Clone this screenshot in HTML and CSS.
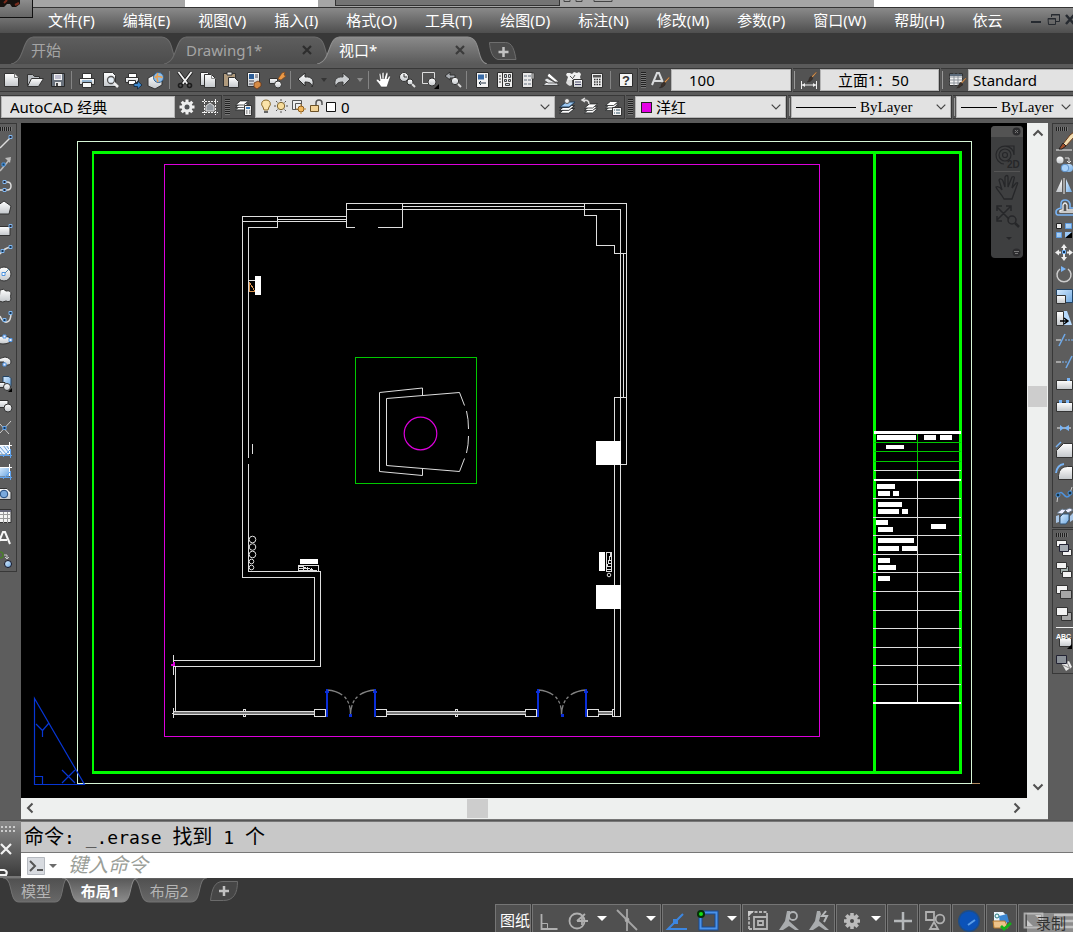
FILE: index.html
```
<!DOCTYPE html>
<html lang="zh-CN">
<head>
<meta charset="utf-8">
<title>AutoCAD 经典</title>
<link rel="stylesheet" href="styles.css">
</head>
<body>
<svg class="defs" aria-hidden="true">
  <defs>
    <linearGradient id="g" x1="0" y1="0" x2="0" y2="1"><stop offset="0" stop-color="#fff"/><stop offset="1" stop-color="#c3c7cb"/></linearGradient>
    <linearGradient id="b" x1="0" y1="0" x2="1" y2="1"><stop offset="0" stop-color="#d8ecff"/><stop offset="1" stop-color="#6fa8e0"/></linearGradient>
    <linearGradient id="tab" x1="0" y1="0" x2="0" y2="1"><stop offset="0" stop-color="#5e5e5e"/><stop offset="1" stop-color="#4c4c4c"/></linearGradient>
    <linearGradient id="tabon" x1="0" y1="0" x2="0" y2="1"><stop offset="0" stop-color="#8a8a8a"/><stop offset="1" stop-color="#5a5a5a"/></linearGradient>
    <linearGradient id="laytab" x1="0" y1="0" x2="0" y2="1"><stop offset="0" stop-color="#505050"/><stop offset="1" stop-color="#686868"/></linearGradient>
    <linearGradient id="layon" x1="0" y1="0" x2="0" y2="1"><stop offset="0" stop-color="#585858"/><stop offset="1" stop-color="#8c8c8c"/></linearGradient>
    <symbol id="brush" viewBox="0 0 22 22"><path d="M19 3l1 1-7 8-2-1z" fill="#e9a65a" stroke="#6b3a1c" stroke-width=".6"/><path d="M12 10q3 2 1 5-3 4-8 4 3-2 3-5 1-4 4-4z" fill="#3c312b" stroke="#1c1c1c" stroke-width=".6"/></symbol>
    <symbol id="layers" viewBox="0 0 22 22"><g fill="#fff" stroke="#26282a"><path d="M3 17l6-5h10l-6 5z"/><path d="M3 14l6-5h10l-6 5z"/><path d="M3 11l6-5h10l-6 5z"/></g></symbol>
    <symbol id="sheet" viewBox="0 0 22 22"><path d="M3.500 4.500h10l4 4v9h-14z" fill="url(#g)" stroke="#333"/><path d="M13.500 4.500v4h4" fill="#eee" stroke="#777"/></symbol>
  </defs>
</svg>

<div class="titlestrip">
  <button class="appbtn" aria-label="应用程序菜单"><svg width="32" height="17" viewBox="0 0 32 17"><path d="M0 0h20v4l-4 3h-4l-2-3H7L4 7H0z" fill="#17120f"/><path d="M4 3l3-3M15 5l4-2" stroke="#7a2b1c" stroke-width="2"/></svg></button>
  <i class="ts ts-a"></i><i class="ts ts-white"></i><i class="ts ts-b"></i><i class="ts ts-box"></i><i class="ts ts-c"><svg width="60" height="3" viewBox="0 0 60 3"><path d="M4 0v1.500h6V0M16 0v1.500h6V0M34 0v1.500h18V0" fill="none" stroke="#444"/></svg></i><i class="ts ts-end"></i>
</div>

<header class="menubar">
  <nav class="menus">
    <button>文件(F)</button><button>编辑(E)</button><button>视图(V)</button><button>插入(I)</button><button>格式(O)</button><button>工具(T)</button><button>绘图(D)</button><button>标注(N)</button><button>修改(M)</button><button>参数(P)</button><button>窗口(W)</button><button>帮助(H)</button><button>依云</button>
  </nav>
  <div class="winbtns">
    <button aria-label="最小化"><svg width="12" height="14" viewBox="0 0 12 14"><path d="M1 9h10" stroke="#262a30" stroke-width="2"/></svg></button>
    <button aria-label="还原"><svg width="13" height="14" viewBox="0 0 13 14" fill="none" stroke="#262a30"><path d="M4.500 4V1.500h8v7H9M1 5.500h7.500v6h-7z"/><path d="M4 2h9M1 6h8" /></svg></button>
    <button aria-label="关闭"><svg width="8" height="14" viewBox="0 0 8 14"><path d="M1 2l8 9M9 2l-8 9" stroke="#262a30" stroke-width="2.500"/></svg></button>
  </div>
</header>

<nav class="filetabs">
  <button class="ftab ftab-start"><svg class="shape" viewBox="0 0 167 28" preserveAspectRatio="none"><path d="M0 28C14 26 10 2 22 1H148C162 2 156 26 167 28z" fill="url(#tab)"/><path d="M0 28C14 26 10 2 22 1H148C162 2 156 26 167 28" fill="none" stroke="#6c6c6c"/></svg><span>开始</span></button>
  <button class="ftab"><svg class="shape" viewBox="0 0 167 28" preserveAspectRatio="none"><path d="M0 28C14 26 10 2 22 1H148C162 2 156 26 167 28z" fill="url(#tab)"/><path d="M0 28C14 26 10 2 22 1H148C162 2 156 26 167 28" fill="none" stroke="#6c6c6c"/></svg><span>Drawing1*</span><svg class="x" width="10" height="10" viewBox="0 0 10 10"><path d="M1 1l8 8M9 1L1 9" stroke="#2d2d2d" stroke-width="2.200"/></svg></button>
  <button class="ftab on"><svg class="shape" viewBox="0 0 167 28" preserveAspectRatio="none"><path d="M0 28C14 26 10 2 22 1H148C162 2 156 26 167 28z" fill="url(#tabon)"/><path d="M0 28C14 26 10 2 22 1H148C162 2 156 26 167 28" fill="none" stroke="#8f8f8f"/></svg><span>视口*</span><svg class="x" width="10" height="10" viewBox="0 0 10 10"><path d="M1 1l8 8M9 1L1 9" stroke="#3b3b3b" stroke-width="2.200"/></svg></button>
  <button class="ftab-add" aria-label="新图形"><svg width="28" height="20" viewBox="0 0 28 20"><path d="M.5 1.500h16c7 0 9 8 10.500 17h-18C3 17 1 9 .5 1.500z" fill="#4c4c4c" stroke="#6e6e6e"/><path d="M14.500 6v10M9.500 11h10" stroke="#c2c2c2" stroke-width="2.500"/></svg></button>
</nav>

<section class="toolbars">
  <div class="trow">
    <div class="tb flush">
      <button class="i" aria-label="新建"><svg viewBox="0 0 22 22"><use href="#sheet"/></svg></button>
      <button class="i" aria-label="打开"><svg viewBox="0 0 22 22"><path d="M3.500 17V5.500h5l2 2h5V10" fill="#b8bcc0" stroke="#333"/><path d="M3.500 17.500l4-8h12l-5 8z" fill="url(#g)" stroke="#333"/></svg></button>
      <button class="i" aria-label="保存"><svg viewBox="0 0 22 22"><path d="M4.500 4.500h13v13h-13z" fill="#69717c" stroke="#282828"/><path d="M7 5h8v6H7z" fill="#f2f2f2"/><path d="M8 7h6M8 9h6" stroke="#88a"/><path d="M8 13h6v4H8z" fill="#e8e8e8"/><path d="M9 14h2v3H9z" fill="#444"/></svg></button>
      <i class="sep"></i>
      <button class="i" aria-label="打印"><svg viewBox="0 0 22 22"><path d="M6.500 9V4.500h9V9" fill="#fff" stroke="#333"/><path d="M3.500 9.500h15v6h-15z" fill="url(#g)" stroke="#333"/><path d="M6.500 13.500h9v5h-9z" fill="#f7f7f7" stroke="#333"/><path d="M6 12h10" stroke="#4b87bb"/></svg></button>
      <button class="i" aria-label="打印预览"><svg viewBox="0 0 22 22"><path d="M4.500 3.500h9l3 3v11h-12z" fill="url(#g)" stroke="#333"/><circle cx="12" cy="11" r="3.500" fill="#e4edf5" stroke="#555" stroke-width="1.300"/><path d="M15 14l4 4" stroke="#eee" stroke-width="2.500"/></svg></button>
      <button class="i" aria-label="发布"><svg viewBox="0 0 22 22"><path d="M6.500 8V4.500h8V8" fill="#fff" stroke="#333"/><path d="M3.500 8.500h13v5h-13z" fill="url(#g)" stroke="#333"/><path d="M6.500 11.500h7v4h-7z" fill="#fff" stroke="#333"/><path d="M12 14.500h3.500V12l4.500 4-4.500 4v-2.500H12z" fill="#3e8ad0" stroke="#123" stroke-width=".8"/></svg></button>
      <button class="i" aria-label="三维打印"><svg viewBox="0 0 22 22"><path d="M3 9l6-3 8 3v7l-7 4-7-3z" fill="url(#g)" stroke="#333"/><circle cx="13.500" cy="8.500" r="5" fill="#8dbdea" stroke="#34638f"/><path d="M9.500 8.500q4-2 8 0M13 4q-2 4 0 9" stroke="#eaa04d" fill="none" stroke-width="1.500"/></svg></button>
      <i class="sep"></i>
      <button class="i" aria-label="剪切"><svg viewBox="0 0 22 22"><path d="M4.500 3l9 12M17.500 3l-9 12" stroke="#1c1c1c" stroke-width="3.500"/><path d="M4.500 3l9 12M17.500 3l-9 12" stroke="#f5f5f5" stroke-width="1.800"/><circle cx="6.500" cy="16.500" r="2" fill="none" stroke="#1c1c1c" stroke-width="1.600"/><circle cx="15.500" cy="16.500" r="2" fill="none" stroke="#1c1c1c" stroke-width="1.600"/></svg></button>
      <button class="i" aria-label="复制"><svg viewBox="0 0 22 22"><path d="M3.500 3.500h7l2 2v11h-9z" fill="url(#g)" stroke="#333"/><path d="M7.500 5.500h7l4 4v9h-11z" fill="url(#g)" stroke="#333"/><path d="M14.500 5.500v4h4" fill="none" stroke="#888"/></svg></button>
      <button class="i" aria-label="粘贴"><svg viewBox="0 0 22 22"><path d="M3.500 4.500h12v13h-12z" fill="#b09a7c" stroke="#333"/><path d="M7 3h5v3H7z" fill="#eee" stroke="#333"/><path d="M8.500 8.500h6l4 4v6h-10z" fill="url(#g)" stroke="#333"/></svg></button>
      <button class="i" aria-label="特性匹配"><svg viewBox="0 0 22 22"><path d="M4.500 3.500h12v14h-12z" fill="url(#g)" stroke="#333"/><path d="M6 5h5v5H6z" fill="#2c5e99"/><path d="M12 6h3M12 8h3M6 12h5M6 15h4" stroke="#445"/><path d="M11 14l4-2 3 2v3l-4 3-3-2z" fill="#d68b46" stroke="#69371a" stroke-width=".8"/></svg></button>
      <button class="i" aria-label="块编辑器"><svg viewBox="0 0 22 22"><path d="M3.500 9.500h8v5h-8z" fill="url(#g)" stroke="#333"/><circle cx="12" cy="15.500" r="3.500" fill="url(#g)" stroke="#333"/><path d="M12 10l4-6 3-1-1 3 2 1-5 4z" fill="#ed9a46" stroke="#80491d" stroke-width=".7"/></svg></button>
      <i class="sep"></i>
      <button class="i" aria-label="放弃"><svg viewBox="0 0 22 22"><path d="M3 10l7-6v4c7-1 10 4 7 10 0-4-3-5-7-5v4z" fill="url(#g)" stroke="#2b2b2b"/></svg></button>
      <button class="dd" aria-label="放弃列表"><svg viewBox="0 0 8 6"><path d="M1 1h6L4 5z" fill="#353535"/></svg></button>
      <button class="i" aria-label="重做"><svg viewBox="0 0 22 22"><path d="M19 10l-7-6v4C5 7 2 12 5 18c0-4 3-5 7-5v4z" fill="#c9cccf" stroke="#3b3b3b"/></svg></button>
      <button class="dd" aria-label="重做列表"><svg viewBox="0 0 8 6"><path d="M1 1h6L4 5z" fill="#8b8b8b"/></svg></button>
      <i class="sep"></i>
      <button class="i" aria-label="平移"><svg viewBox="0 0 22 22"><path d="M8 18C6 14 4 13 3 11c1-1 2-1 4 1L6 5c1-1 2 0 2 1l1 4V4c1-1 2-1 2 0v6l2-6c1-1 2 0 2 1l-1 5 2-3c1 0 2 0 1 2-1 3-2 6-3 9z" fill="#fff" stroke="#333" stroke-width=".6"/></svg></button>
      <button class="i" aria-label="实时缩放"><svg viewBox="0 0 22 22"><circle cx="8" cy="8" r="4.500" fill="url(#g)" stroke="#333"/><path d="M8 5v3h3" stroke="#333" fill="none"/><circle cx="14" cy="13" r="3" fill="url(#g)" stroke="#333"/><path d="M16 15l3 3" stroke="#ddd" stroke-width="2"/></svg></button>
      <button class="i" aria-label="窗口缩放"><svg viewBox="0 0 22 22"><path d="M3.500 3.500h12v11h-12z" fill="none" stroke="#ddd"/><circle cx="13" cy="13" r="4" fill="url(#g)" stroke="#333"/><path d="M20 15v5h-5z" fill="#000"/></svg></button>
      <button class="i" aria-label="缩放上一个"><svg viewBox="0 0 22 22"><path d="M3 7l5-4v3h5v3H8v2z" fill="#a9adb2" stroke="#333"/><circle cx="13" cy="12" r="3.700" fill="url(#g)" stroke="#333"/><path d="M16 15l3 3" stroke="#ddd" stroke-width="2"/></svg></button>
      <i class="sep"></i>
      <button class="i" aria-label="特性"><svg viewBox="0 0 22 22"><path d="M5.500 3.500h12v15h-12z" fill="#f3f3f3" stroke="#2b2b2b"/><path d="M7 5.500h6v5H7z" fill="#386ba8"/><path d="M14 6h2M14 8h2M8 14h7M8 14l2-2M8 14l2 2" stroke="#234" fill="none"/></svg></button>
      <button class="i" aria-label="设计中心"><svg viewBox="0 0 22 22"><path d="M3.500 3.500h15v15h-15z" fill="#eee" stroke="#2b2b2b"/><path d="M8.500 4v14" stroke="#333"/><path d="M5 7h2M5 10h2M5 13h2" stroke="#333"/><path d="M10.500 5.500h2v3h-2zM14.500 5.500h2v3h-2zM10.500 10.500h2v2h-2zM14.500 10.500h2v2h-2zM11.500 14.500h4v2h-4z" fill="#c8d4e2" stroke="#444"/></svg></button>
      <button class="i" aria-label="工具选项板"><svg viewBox="0 0 22 22"><path d="M5.500 3.500h10v15h-10z" fill="#e9e9e9" stroke="#333"/><path d="M15 4h2v6h-2z" fill="#ccc" stroke="#333" stroke-width=".7"/><path d="M7 6h3v2H7zM11 6h3v2h-3zM7 10h3v2H7zM11 10h3v2h-3zM7 14h3v2H7zM11 14h3v2h-3z" fill="#a6acb4"/></svg></button>
      <button class="i" aria-label="图纸集"><svg viewBox="0 0 22 22"><path d="M3 16.500l3-3h10l3 3z" fill="url(#g)" stroke="#333" stroke-width=".8"/><path d="M4 11l3-2 9 5H8z" fill="#e2e4e6" stroke="#444" stroke-width=".8"/><path d="M7 7l2-3 10 9h-4z" fill="#fff" stroke="#444" stroke-width=".8"/></svg></button>
      <button class="i" aria-label="标记集"><svg viewBox="0 0 22 22"><path d="M4 4h3l2 1 2-2 3 1 2-1 2 2-1 3 1 3H4l1-3-2-2z" fill="#f1f1f1"/><path d="M4 11l-1 3 2 2 2 1 2-1v-5z" fill="#ddd"/><path d="M7 7l3 3M12 6l-2 3" stroke="#555"/><path d="M10.500 10.500h9v8h-9z" fill="url(#g)" stroke="#333"/><path d="M12 13h6M12 15.500h6" stroke="#446"/></svg></button>
      <button class="i" aria-label="计算器"><svg viewBox="0 0 22 22"><path d="M5.500 4.500h11v14h-11z" fill="#eee" stroke="#333"/><path d="M7 6h8v2.500H7z" fill="#555"/><path d="M8 10.500h1.500M10.500 10.500H12M13 10.500h1.500M8 13h1.500M10.500 13H12M13 13h1.500M8 15.500h1.500M10.500 15.500H12M13 15.500h1.500" stroke="#333" stroke-width="1.500"/></svg></button>
      <i class="sep"></i>
      <button class="i" aria-label="帮助"><svg viewBox="0 0 22 22"><path d="M4.500 4.500h13v13h-13z" fill="#f4f4f4" stroke="#2b2b2b"/><text x="11" y="16" text-anchor="middle" class="q">?</text></svg></button>
    </div>
    <div class="tb">
      <i class="grip"></i>
      <button class="i" aria-label="文字样式"><svg viewBox="0 0 22 22"><path d="M3 16L8 4h2l5 12M5 12h8" fill="none" stroke="#d9dbdd" stroke-width="2"/><use href="#brush" x="7" y="6" width="15" height="15"/></svg></button>
      <select class="combo w120 pl18" aria-label="文字样式"><option>100</option></select>
    </div>
    <div class="tb slim">
      <i class="bar"></i>
      <button class="i" aria-label="标注样式"><svg viewBox="0 0 22 22"><path d="M3.500 12v8M18.500 12v8M3 16h16" stroke="#eee"/><path d="M4 16l3-2v4zM18 16l-3-2v4z" fill="#eee"/><use href="#brush" x="5" y="1" width="16" height="14"/></svg></button>
      <select class="combo w118 pl18" aria-label="标注样式"><option>立面1：50</option></select>
    </div>
    <div class="tb slim grow">
      <i class="bar"></i>
      <button class="i" aria-label="表格样式"><svg viewBox="0 0 22 22"><path d="M3.500 4.500h13v12h-13z" fill="#f2f2f2" stroke="#333"/><path d="M3.500 8h13M3.500 11h13M3.500 14h13M8 4.500v12M12 4.500v12" stroke="#8b9199"/><path d="M4 5h12v2H4z" fill="#5c6a7a"/><use href="#brush" x="7" y="7" width="15" height="14"/></svg></button>
      <select class="combo w160 grow" aria-label="表格样式"><option>Standard</option></select>
    </div>
  </div>

  <div class="trow">
    <div class="tb">
      <select class="combo w174 pl9" aria-label="工作空间"><option>AutoCAD 经典</option></select>
      <button class="i" aria-label="工作空间设置"><svg viewBox="0 0 22 22"><g stroke="#f0f0f0" stroke-width="3"><path d="M11 3.500v15M3.500 11h15M5.700 5.700l10.600 10.600M16.300 5.700L5.700 16.300"/></g><circle cx="11" cy="11" r="5.500" fill="#eceded"/><circle cx="11" cy="11" r="2.500" fill="#505356"/></svg></button>
      <button class="i" aria-label="我的工作空间"><svg viewBox="0 0 22 22"><path d="M5.500 3v16M16.500 3v16M3 5.500h16M3 16.500h16" stroke="#f0f0f0" stroke-dasharray="2 1"/><path d="M7 15v-5l4-3 4 3v5z" fill="#91979e" stroke="#ddd"/></svg></button>
    </div>
    <div class="tb">
      <i class="grip"></i>
      <button class="i" aria-label="图层特性"><svg viewBox="0 0 22 22"><use href="#layers" x="0" y="-1" width="18" height="20"/><path d="M11.500 9.500h7v10h-7z" fill="#f3f3f3" stroke="#333"/><path d="M13 12h4" stroke="#3f7dbd" stroke-width="2"/><path d="M13 15h1.500M16 15h1.500M13 17h1.500M16 17h1.500" stroke="#555"/></svg></button>
      <div class="combo box w299">
        <svg width="90" height="18" viewBox="0 0 90 18" class="lay" aria-hidden="true">
          <path d="M10 2a4 4 0 0 1 3 7l-1 3H8L7 9a4 4 0 0 1 3-7z" fill="#fbe3a8" stroke="#8a6a2a"/><path d="M8 13h4v2H8z" fill="#666"/>
          <circle cx="25" cy="8" r="3.700" fill="#f7dc9b" stroke="#7d6330"/><path d="M25 1v2M25 13v2M18 8h2M30 8h2M20 3l1.500 1.500M28.500 11.500L30 13M20 13l1.500-1.500M28.500 4.500L30 3" stroke="#555"/>
          <path d="M36.500 2.500h9v9h-9zM39.500 5.500h6v6h-6z" fill="#eee" stroke="#555"/><circle cx="45" cy="11" r="3" fill="#f4b95d" stroke="#8a5b1b"/><path d="M45 6v10M40 11h10" stroke="#c98527" stroke-dasharray="1.500 7"/>
          <path d="M60 8V5a3 3 0 0 1 6 0v2" fill="none" stroke="#555" stroke-width="1.500"/><path d="M54.500 7.500h8v6h-8z" fill="#f1d296" stroke="#6b5127"/>
          <path d="M70.500 4.500h9v9h-9z" fill="#fff" stroke="#111"/>
        </svg>
        <select class="bare" aria-label="图层"><option>0</option></select>
      </div>
      <button class="i" aria-label="置为当前图层"><svg viewBox="0 0 22 22"><use href="#layers" x="0" y="1" width="22" height="21"/><path d="M4 11l6-5h9l-6 5z" fill="#9cc8f2" stroke="#26405a"/><circle cx="11" cy="5" r="2.500" fill="#eee" stroke="#555"/></svg></button>
      <button class="i" aria-label="上一个图层"><svg viewBox="0 0 22 22"><use href="#layers" x="3" y="3" width="18" height="18"/><path d="M10 8c0-4-3-4-6-4M6 2L3 4l3 2" fill="none" stroke="#ddd" stroke-width="1.500"/></svg></button>
      <button class="i" aria-label="图层状态"><svg viewBox="0 0 22 22"><use href="#layers" x="1" y="0" width="18" height="19"/><path d="M10.500 11.500h9v8h-9z" fill="#f3f3f3" stroke="#333"/><path d="M12 14h1M14 14h4M12 17h1M14 17h4" stroke="#356"/></svg></button>
    </div>
    <div class="tb">
      <i class="grip"></i>
      <div class="combo box w150"><i class="swatch"></i><select class="bare" aria-label="颜色"><option>洋红</option></select></div>
    </div>
    <div class="tb slim2">
      <i class="bar"></i>
      <div class="combo box w159 serif"><i class="line l60"></i><select class="bare" aria-label="线型"><option>ByLayer</option></select></div>
    </div>
    <div class="tb slim2 grow">
      <i class="bar"></i>
      <div class="combo box w120 serif grow"><i class="line l36"></i><select class="bare" aria-label="线宽"><option>ByLayer</option></select></div>
    </div>
  </div>
</section>

<main class="workspace">
  <aside class="side left">
    <i class="vgrip"></i>
    <button aria-label="直线"><svg viewBox="0 0 16 22"><path d="M0 17L10 7" stroke="#ddd" stroke-width="1.500"/><path d="M9 4.500h3v3H9z" fill="#223" stroke="#7fb6ef"/></svg></button>
    <button aria-label="构造线"><svg viewBox="0 0 16 22"><path d="M0 18L10 6" stroke="#bbb" stroke-width="1.500"/><path d="M5 5l6-1-1 6z" fill="#bbb"/><path d="M2 10h3v3H2z" fill="#146" stroke="#4f94e0"/></svg></button>
    <button aria-label="多段线"><svg viewBox="0 0 16 22"><path d="M4 7h3q4 0 4 4t-4 4H0" fill="none" stroke="#ddd" stroke-width="1.500"/><path d="M3 5.500h3v3H3zM3 13.500h3v3H3z" fill="#223" stroke="#7fb6ef"/></svg></button>
    <button aria-label="多边形"><svg viewBox="0 0 16 22"><path d="M-3 9l7-5 7 5-2 8h-10z" fill="url(#g)" stroke="#333"/></svg></button>
    <button aria-label="矩形"><svg viewBox="0 0 16 22"><path d="M-2 7.500h12v9H-2z" fill="url(#g)" stroke="#333"/><path d="M9 5.500h3v3H9z" fill="#223" stroke="#7fb6ef"/></svg></button>
    <button aria-label="圆弧"><svg viewBox="0 0 16 22"><path d="M0 13Q4 7 11 6" fill="none" stroke="#ddd" stroke-width="1.500"/><path d="M9 4.500h3v3H9zM1 8.500h3v3H1z" fill="#135" stroke="#7fb6ef"/></svg></button>
    <button aria-label="圆"><svg viewBox="0 0 16 22"><circle cx="4" cy="11" r="7" fill="url(#g)" stroke="#333"/><path d="M4 11l5-5" stroke="#58a"/><path d="M2 9.500h3v3H2z" fill="#fff" stroke="#4f94e0"/></svg></button>
    <button aria-label="修订云线"><svg viewBox="0 0 16 22"><path d="M0 5q4-2 6 1 5-1 5 3-1 2 0 5-1 4-5 2-3 2-7 0z" fill="url(#g)" stroke="#333"/></svg></button>
    <button aria-label="样条曲线"><svg viewBox="0 0 16 22"><path d="M0 9q3 7 7 6 4-1 4-9" fill="none" stroke="#ddd" stroke-width="1.500"/><path d="M9 4.500h3v3H9zM3 11.500h3v3H3z" fill="#135" stroke="#7fb6ef"/></svg></button>
    <button aria-label="椭圆"><svg viewBox="0 0 16 22"><ellipse cx="3" cy="11" rx="8" ry="4" fill="url(#g)" stroke="#333"/><path d="M3 6h3v3H3zM9 9.500h3v3H9z" fill="#eef" stroke="#4f94e0"/></svg></button>
    <button aria-label="椭圆弧"><svg viewBox="0 0 16 22"><path d="M-3 11q3-5 8-5 6 1 6 5t-7 3v-3z" fill="url(#g)" stroke="#333"/><path d="M3 12h3v3H3z" fill="#eef" stroke="#4f94e0"/></svg></button>
    <button aria-label="插入块"><svg viewBox="0 0 16 22"><path d="M3 3.500h6l2 2v8H3z" fill="url(#b)" stroke="#246"/><path d="M-1 9.500h6v5h-6z" fill="url(#g)" stroke="#333"/><circle cx="7" cy="14" r="3.500" fill="url(#g)" stroke="#333"/><path d="M12 15v4H8z" fill="#000"/></svg></button>
    <button aria-label="创建块"><svg viewBox="0 0 16 22"><path d="M-1 5.500h9v7h-9z" fill="url(#g)" stroke="#333"/><circle cx="8" cy="13" r="4" fill="url(#g)" stroke="#333"/></svg></button>
    <button aria-label="点"><svg viewBox="0 0 16 22"><path d="M0 7l9 10M0 16L11 4" stroke="#ccc"/><path d="M3 9.500h3v3H3z" fill="#135" stroke="#5fa3ef"/></svg></button>
    <button aria-label="图案填充"><svg viewBox="0 0 16 22"><path d="M-1 6.500h10v9H-1z" fill="#e8f2ff"/><path d="M0 8l7 8M3 6l6 8M0 12l3 4M6 6l3 4" stroke="#6e9fd0"/><path d="M0 6.500h12M9.500 3v12" stroke="#fff"/><path d="M0 16.500h12M10.500 11v8M3 18l8-8" stroke="#5fa3ef"/></svg></button>
    <button aria-label="渐变色"><svg viewBox="0 0 16 22"><path d="M-1 6.500h10v9H-1z" fill="url(#b)"/><path d="M0 6.500h12M9.500 3v12" stroke="#fff"/><path d="M0 16.500h12M10.500 11v8M3 18l8-8" stroke="#5fa3ef"/></svg></button>
    <button aria-label="面域"><svg viewBox="0 0 16 22"><path d="M-1 5.500H7l4 4v7H-1z" fill="url(#g)" stroke="#333"/><circle cx="4" cy="11" r="3.800" fill="#7aa9dc" stroke="#234a7c"/></svg></button>
    <button aria-label="表格"><svg viewBox="0 0 16 22"><path d="M-1 4.500h12v13H-1z" fill="#f3f3f3" stroke="#333"/><path d="M0 9.500h11M0 13.500h11M3.500 6v12M7.500 6v12" stroke="#999"/><path d="M0 5h11v2H0z" fill="#667"/></svg></button>
    <button aria-label="多行文字"><svg viewBox="0 0 16 22"><path d="M-2 17L3 5h2l5 12M0 13h7" fill="none" stroke="#f5f5f5" stroke-width="2"/></svg></button>
    <button aria-label="添加选定对象"><svg viewBox="0 0 16 22"><circle cx="0" cy="6" r="3" fill="none" stroke="#4a7d2b" stroke-width="1.500"/><path d="M4 6h3v4M5 8l2 2 2-2" stroke="#ccc" fill="none"/><circle cx="8" cy="15" r="3.500" fill="url(#b)" stroke="#112"/></svg></button>
  </aside>

  <section class="canvas" aria-label="布局1">
    <svg class="drawing" viewBox="21 123 1006 675" shape-rendering="crispEdges" fill="none">
      <path d="M77.500 141.500H971.500V783.500H77.500z" stroke="#d6f5d6"/>
      <path d="M972 783.500h8" stroke="#b08a60"/>
      <g fill="#00fb00"><path d="M92 151h870v3H92zM92 771h870v3H92zM92 151h2v622h-2zM873 151h3v622h-3zM959 151h3v622h-3z"/></g>
      <path d="M164.500 164.500H819.500V736.500H164.500z" stroke="#dc00dc"/>
      <path d="M874 442.500h87M874 451.500h87M874 461.500h87M917.500 432v48" stroke="#00c800"/>
      <path d="M874 470.500h87M873 498.500h88M873 517.500h88M873 535.500h88M873 554.500h88M873 572.500h88M873 591.500h88M873 610.500h88M873 628.500h88M873 647.500h88M873 665.500h88M873 684.500h88M917.500 481v222" stroke="#dedede"/>
      <path d="M874 431h87v3h-87zM874 479h87v2h-87zM873 702h88v2h-88zM877 435h39v5h-39zM924 435h12v5h-12zM940 435h12v5h-12zM886 445h18v4h-18zM877 484h18v5h-18zM878 491h12v5h-12zM893 491h6v5h-6zM878 502h24v5h-24zM878 509h21v5h-21zM902 509h6v5h-6zM876 520h12v5h-12zM878 527h15v5h-15zM931 524h15v5h-15zM878 538h36v5h-36zM878 546h21v5h-21zM902 546h15v5h-15zM878 558h12v5h-12zM878 565h18v5h-18zM878 576h12v5h-12z" fill="#fff"/>
      <g stroke="#dedede">
        <path d="M346 216.500H242.500V577.500H314.500V660.500H173M346 221.500H242M346 219.500H277M277.500 216v11.500H248.500V458M248.500 464v107.500H320.500V666.500H173"/>
        <path d="M355 227.500h-8.500v-24H626.500V464.500H620M346 209.500H620.500V716.500H614.500V465M378 227.500h24.500v-24M402 206.500h182M584.500 203v12.500h12v30h18v8h12M623.500 253v144M626 397.500h-11.500V441"/>
        <path d="M252.500 444v10M173.500 655v7M173.500 666v9M175.500 666v46M173.500 708v10M172 713.500h4"/>
        <path d="M174 711.500h140M174 714.500h140M387 711.500h139M387 714.500h139M598 711.500h14M598 714.500h14M243.500 709.500h2v7h-2zM455.500 709.500h2v7h-2zM314.500 709.500h11v7h-11zM375.500 709.500h11v7h-11zM525.500 709.500h11v7h-11zM587.500 709.500h11v7h-11zM612.500 709.500h2v7h-2z"/>
        <path d="M298.500 565.500h20v6h-20zM299 568h8M299 570h14M303 566v5M307 567v4M311 568v3M299 566l18 5M606.500 552.500h5v19h-5zM611 553l-5 18M609 560h3M608 563h3M607 566h5M607 569h5"/>
      </g>
      <path d="M174 713h140M387 713h139M598 713h14" stroke="#777" stroke-width="2"/>
      <g stroke="#dedede" shape-rendering="auto">
        <path d="M422.500 395v-7L379.500 392.500V471.500L422.500 475.500V469M464.500 405.500L459.500 392.500 386.500 398.500V465.500L459.500 471.500 464.500 458.500M466.500 411q2 8 2 18M468.500 436q0 9-2 17"/>
        <circle cx="252.500" cy="539.500" r="3.300"/><circle cx="252.500" cy="547" r="3.300"/><circle cx="252.500" cy="554.500" r="3.300"/><circle cx="251.500" cy="561.500" r="2.300"/><circle cx="251.500" cy="567.500" r="2.300"/><circle cx="609" cy="575" r="1.800"/>
      </g>
      <path d="M355.500 357.500h121v126h-121z" stroke="#00c800"/>
      <circle cx="420.500" cy="433.500" r="16.300" stroke="#dc00dc" stroke-width="1.200" shape-rendering="auto"/>
      <path d="M255 276h6v19h-6zM300 559h18v5h-18zM599 552h6v19h-6zM596 441h25v24h-25zM596 585h25v24h-25z" fill="#fff"/>
      <path d="M249 280.500h6" stroke="#ddd"/><path d="M249.500 282v9.500h5M249.500 282l5 9" stroke="#d8924e"/>
      <path d="M171 664.500h4M173.500 662v4" stroke="#dc00dc" stroke-width="2"/>
      <g stroke="#808080" stroke-width="1.300" shape-rendering="auto">
        <path d="M327 690q24 2 23.500 25M375 690q-24 2-24.500 25M538 690q24 2 23.500 25M586 690q-24 2-24.500 25" stroke-dasharray="16 3 3 2 3 2"/>
      </g>
      <path d="M326 689h2v28h-2zM374 689h2v28h-2zM537 689h2v28h-2zM585 689h2v28h-2zM325 691h4v2h-4zM373 691h4v2h-4zM536 691h4v2h-4zM584 691h4v2h-4zM349 714h3v3h-3zM561 714h3v3h-3z" fill="#0a2ed8"/>
      <g stroke="#0736d4" stroke-width="1.200" shape-rendering="auto">
        <path d="M34.500 698.500V784.500H84.500z"/><path d="M34 776.500h8.500v8M36 724l6.500 6.500L49 723M42.500 730v7M62 770l13 13M75 770l-13 13"/>
      </g>
    </svg>
    <nav class="navbar" aria-label="导航栏">
      <button class="nb-top" aria-label="关闭导航栏"><svg width="9" height="9" viewBox="0 0 9 9"><circle cx="4.500" cy="4.500" r="4" fill="#2c2c2e"/><path d="M3 3l3 3M6 3L3 6" stroke="#777"/></svg></button>
      <button class="nb" aria-label="控制盘"><svg width="26" height="30" viewBox="0 0 26 30" fill="none" stroke="#262729" stroke-width="1.200"><path d="M10 25a9 9 0 1 1 10-9V7h-9"/><circle cx="11" cy="16" r="6"/><circle cx="11" cy="16" r="2.500"/><text x="13" y="29" class="two">2D</text></svg></button>
      <button class="nb line-top" aria-label="平移"><svg width="26" height="30" viewBox="0 0 26 30"><path d="M10 27C6 20 3 18 2 15c2-1 4 0 6 3L5 8c1-2 3-1 4 1l2 6V5c1-2 3-2 3 0v10l4-10c2-1 3 0 2 2l-2 9 4-5c2-1 2 0 1 2l-5 14z" fill="none" stroke="#262729" stroke-width="1.300"/></svg></button>
      <button class="nb" aria-label="缩放"><svg width="26" height="25" viewBox="0 0 26 25" fill="none" stroke="#262729" stroke-width="1.500"><path d="M3 3l12 12M17 2L3 16M3 7V2h5M12 2h5v5M3 12v5h5"/><circle cx="18" cy="16" r="4"/><path d="M21 19l4 4" stroke-width="2.500"/></svg></button>
      <button class="nb" aria-label="缩放列表"><svg width="26" height="14" viewBox="0 0 26 14"><path d="M12 6h6l-3 3z" fill="#262729"/></svg></button>
      <button class="nb-top end" aria-label="导航栏选项"><svg width="9" height="9" viewBox="0 0 9 9"><circle cx="4.500" cy="4.500" r="4" fill="#2c2c2e"/><path d="M2 3.500h5M3 5.500h3" stroke="#777"/></svg></button>
    </nav>
  </section>

  <div class="vscroll"><svg width="12" height="8" viewBox="0 0 12 8"><path d="M1.500 6.500L6 2l4.500 4.500" fill="none" stroke="#505050" stroke-width="2"/></svg><i class="up"></i><i class="thumb"></i><i class="down"></i><svg width="12" height="8" viewBox="0 0 12 8"><path d="M1.500 1.500L6 6l4.500-4.500" fill="none" stroke="#505050" stroke-width="2"/></svg></div>
  <div class="hscroll"><svg width="8" height="12" viewBox="0 0 8 12"><path d="M6.500 1.500L2 6l4.500 4.500" fill="none" stroke="#505050" stroke-width="2"/></svg><i class="before"></i><i class="thumb"></i><i class="after"></i><svg width="8" height="12" viewBox="0 0 8 12"><path d="M1.500 1.500L6 6l-4.500 4.500" fill="none" stroke="#505050" stroke-width="2"/></svg></div>

  <aside class="side right">
    <div class="group">
      <i class="vgrip"></i>
      <button aria-label="删除"><svg viewBox="0 0 20 22"><path d="M3 19h16" stroke="#eee"/><path d="M17 4l4-3v5l-8 9-3-2z" fill="#f2dcae" stroke="#6b3a1c"/><path d="M10 12l3 3-4 3H6z" fill="#a4502a" stroke="#222"/></svg></button>
      <button aria-label="复制"><svg viewBox="0 0 20 22"><circle cx="7" cy="7" r="3.500" fill="url(#g)"/><path d="M12 5h4v4M14 8l2 2 2-2" fill="none" stroke="#ddd"/><circle cx="16" cy="15" r="4" fill="url(#b)"/><circle cx="12" cy="15" r="3.800" fill="#a8d2fb" stroke="#5d91c9"/></svg></button>
      <button aria-label="镜像"><svg viewBox="0 0 20 22"><path d="M3 17L9 4v13z" fill="url(#g)"/><path d="M11 3v16" stroke="#eee"/><path d="M13 4l6 13h-6z" fill="url(#b)"/></svg></button>
      <button aria-label="偏移"><svg viewBox="0 0 20 22"><path d="M21 18H5q-2 0-2-3t5-4V7q0-4 4-4t5 4v4h4" fill="none" stroke="#79b4f5" stroke-width="1.600"/><path d="M21 15H7q-1-2 3-2V8q2-4 4 0v5h7" fill="#555" stroke="#eee" stroke-width="1.300"/></svg></button>
      <button aria-label="阵列"><svg viewBox="0 0 20 22"><path d="M3.500 4.500h5v5h-5z" fill="#eee" stroke="#222"/><path d="M12.500 4.500h6v5h-6zM3.500 13.500h5v5h-5z" fill="url(#b)" stroke="#5d9be0"/><path d="M12 13h7v6h-7z" fill="#9ac7f5"/><path d="M19 13v6h-7z" fill="#000"/></svg></button>
      <button aria-label="移动"><svg viewBox="0 0 20 22"><path d="M11 3l3 4h-2v2h-2V7H8zM11 20l3-4h-2v-3h-2v3H8zM2 11.500l4-3v2h2v2H6v2zM20 11.500l-4-3v2h-2v2h2v2z" fill="#eee"/><path d="M9.500 9.500h3v3h-3z" fill="#135" stroke="#79b4f5"/></svg></button>
      <button aria-label="旋转"><svg viewBox="0 0 20 22"><path d="M7 6a7 7 0 1 0 8 0" fill="none" stroke="#ccc" stroke-width="1.500"/><path d="M8 3l5 3-5 3z" fill="#79b4f5"/></svg></button>
      <button aria-label="缩放"><svg viewBox="0 0 20 22"><path d="M3.500 4.500h16v13h-16z" fill="url(#b)" stroke="#246"/><path d="M3.500 10.500h9v8h-9z" fill="url(#g)" stroke="#333"/></svg></button>
      <button aria-label="拉伸"><svg viewBox="0 0 20 22"><path d="M10 4h4l5 14h-9z" fill="#b7dafd"/><path d="M3.500 4.500h7v14h-7z" fill="url(#g)" stroke="#333"/><path d="M7 14h7M11 11l4 3-4 3" fill="none" stroke="#000" stroke-width="1.500"/></svg></button>
      <button aria-label="修剪"><svg viewBox="0 0 20 22"><path d="M3 11h5" stroke="#eee"/><path d="M12 11h8" stroke="#79b4f5" stroke-dasharray="2 1"/><path d="M6 17l6-12" stroke="#6fa9e8" stroke-width="1.500"/></svg></button>
      <button aria-label="延伸"><svg viewBox="0 0 20 22"><path d="M3 11h5" stroke="#eee"/><path d="M9 11h5" stroke="#79b4f5" stroke-dasharray="2 1"/><path d="M13 17l6-12" stroke="#6fa9e8" stroke-width="1.500"/></svg></button>
      <button aria-label="打断于点"><svg viewBox="0 0 20 22"><path d="M3.500 7.500h16v9h-16z" fill="url(#g)" stroke="#333"/><path d="M14 5h3v3h-3z" fill="#79b4f5"/></svg></button>
      <button aria-label="打断"><svg viewBox="0 0 20 22"><path d="M3.500 7.500h16v9h-16z" fill="url(#g)" stroke="#333"/><path d="M6 5h3v3H6zM13 5h3v3h-3z" fill="#79b4f5"/></svg></button>
      <button aria-label="合并"><svg viewBox="0 0 20 22"><path d="M4 11h14" stroke="#eee"/><path d="M7 8l4 3-4 3zM16 8l-5 3 5 3z" fill="#79b4f5"/></svg></button>
      <button aria-label="倒角"><svg viewBox="0 0 20 22"><path d="M3.500 18.500v-7l7-7h9v14z" fill="url(#g)" stroke="#333"/><path d="M3 8l5-5" stroke="#79b4f5" stroke-width="1.500"/></svg></button>
      <button aria-label="圆角"><svg viewBox="0 0 20 22"><path d="M5.500 18.500v-4q1-9 9-9h5v13z" fill="url(#g)" stroke="#333"/><path d="M3 12q1-8 8-9" fill="none" stroke="#79b4f5" stroke-width="1.800"/></svg></button>
      <button aria-label="光顺曲线"><svg viewBox="0 0 20 22"><path d="M4 19l1-7M17 10l2-6" stroke="#ccc"/><path d="M5 12c5-8 6 7 12 0" fill="none" stroke="#4f94e0" stroke-width="1.500"/><circle cx="5" cy="12" r="2" fill="#134" stroke="#4f94e0"/><circle cx="17" cy="10" r="2" fill="#134" stroke="#4f94e0"/></svg></button>
      <button aria-label="分解"><svg viewBox="0 0 20 22"><path d="M4 8l5-4 4 1-4 4zM12 5l5-2 3 2-5 3z" fill="#eef" stroke="#678"/><path d="M7 12l3-3h6v6l-3 4H7z" fill="url(#b)" stroke="#357"/><path d="M3 11l3-1v7l-3 1zM17 11l3-3v7l-3 2z" fill="#a9c6e6"/></svg></button>
    </div>
    <div class="group">
      <i class="vgrip"></i>
      <button aria-label="前置"><svg viewBox="0 0 20 22"><path d="M3.500 3.500h10v6h-10zM9.500 12.500h9v6h-9z" fill="#f3f3f3" stroke="#333"/><path d="M6.500 7.500h9v7h-9z" fill="#a3a9b0" stroke="#223"/></svg></button>
      <button aria-label="后置"><svg viewBox="0 0 20 22"><path d="M7.500 7.500h8v7h-8z" fill="#a3b0ad" stroke="#333"/><path d="M3.500 3.500h10v6h-10zM9.500 12.500h9v6h-9z" fill="#f3f3f3" stroke="#333"/></svg></button>
      <button aria-label="置于对象之上"><svg viewBox="0 0 20 22"><path d="M3.500 4.500h11v8h-11z" fill="#f3f3f3" stroke="#333"/><path d="M7.500 9.500h11v8h-11z" fill="#a6a6a6" stroke="#333"/></svg></button>
      <button aria-label="置于对象之下"><svg viewBox="0 0 20 22"><path d="M8.500 9.500h10v8h-10z" fill="#a6a6a6" stroke="#333"/><path d="M3.500 4.500h11v8h-11z" fill="#f3f3f3" stroke="#333"/></svg></button>
      <i class="hsep"></i>
      <button aria-label="文字前置"><svg viewBox="0 0 20 22"><path d="M6.500 9.500h12v8h-12z" fill="url(#g)" stroke="#333"/><text x="3" y="10" class="abc">ABC</text><path d="M19 15v5h-5z" fill="#000"/></svg></button>
      <button aria-label="填充后置"><svg viewBox="0 0 20 22"><path d="M9 13l7-3 3 6-6 4z" fill="#e9e9e9"/><path d="M10 14l8 4M14 11l3 7" stroke="#888"/><path d="M3.500 4.500h10v8h-10z" fill="#8a9097" stroke="#223"/></svg></button>
    </div>
  </aside>
</main>

<section class="command">
  <div class="cmdgrip"><i class="dots"></i><button aria-label="关闭命令行"><svg width="12" height="12" viewBox="0 0 12 12"><path d="M1 1l10 10M11 1L1 11" stroke="#f2f2f2" stroke-width="2.200"/></svg></button><svg width="14" height="10" viewBox="0 0 14 10"><path d="M0 4h4q4 1 2 5H0" fill="none" stroke="#f2f2f2" stroke-width="2.200"/></svg></div>
  <div class="cmdbody">
    <output class="history"><span class="han">命令</span>: _.erase <span class="han">找到</span> 1 <span class="han">个</span></output>
    <div class="prompt">
      <button aria-label="最近使用的命令"><svg width="34" height="20" viewBox="0 0 34 20"><path d="M1.500 1.500h17v17h-17z" fill="#d8dbe0" stroke="#b6bac0"/><path d="M4 5l5 5-5 5M11 14h6" fill="none" stroke="#555" stroke-width="2"/><path d="M23 8h8l-4 4z" fill="#6b6b6b"/></svg></button>
      <input type="text" placeholder="键入命令" aria-label="命令">
    </div>
  </div>
</section>

<footer class="bottom">
  <nav class="layouts">
    <button class="ltab t1"><svg class="shape" viewBox="0 0 74 24" preserveAspectRatio="none"><path d="M0 0C12 0 6 23 18 23H58C70 23 64 0 74 0z" fill="url(#laytab)" stroke="#737373"/></svg><span>模型</span></button>
    <button class="ltab t2 on"><svg class="shape" viewBox="0 0 74 24" preserveAspectRatio="none"><path d="M0 0C12 0 6 23 18 23H58C70 23 64 0 74 0z" fill="url(#layon)" stroke="#8b8b8b"/></svg><span>布局1</span></button>
    <button class="ltab t2"><svg class="shape" viewBox="0 0 74 24" preserveAspectRatio="none"><path d="M0 0C12 0 6 23 18 23H58C70 23 64 0 74 0z" fill="url(#laytab)" stroke="#737373"/></svg><span>布局2</span></button>
    <button class="ladd" aria-label="新建布局"><svg width="30" height="22" viewBox="0 0 30 22"><path d="M28.500 1.500c0 12-4 19-14 19H1.500C3 8 6 1.500 14 1.500z" fill="#464646" stroke="#6b6b6b"/><path d="M15 6v10M10 11h10" stroke="#c2c2c2" stroke-width="2.500"/></svg></button>
  </nav>
  <div class="status">
    <div class="sg g36"><button class="paper">图纸</button></div>
    <div class="sg g130">
      <button aria-label="正交"><svg width="30" height="26" viewBox="0 0 30 26" fill="none" stroke="#b0b0b0"><path d="M8.500 8v15h16" stroke-width="1.800"/><path d="M9 17.500h5.500v5"/></svg></button>
      <button aria-label="极轴"><svg width="30" height="26" viewBox="0 0 30 26" fill="none" stroke="#b0b0b0" stroke-width="1.800"><circle cx="14" cy="15" r="7.500"/><path d="M14 15h11M14 15l8-7M19 11v8"/></svg></button>
      <i class="tri"></i>
      <button aria-label="等轴测"><svg width="30" height="26" viewBox="0 0 30 26" fill="none" stroke="#a5a5a5" stroke-width="1.800"><path d="M5 4l20 20M15 3v22" /><circle cx="15" cy="14" r="1.500" fill="#c2c2c2"/></svg></button>
      <i class="tri"></i>
    </div>
    <div class="sg g80">
      <button aria-label="对象捕捉追踪"><svg width="30" height="26" viewBox="0 0 30 26" fill="none" stroke="#3c86e0" stroke-width="2"><path d="M24 23H5L20 8" /><path d="M10 13h5v5h-5z" fill="#3c86e0" stroke="none"/></svg></button>
      <button aria-label="对象捕捉"><svg width="30" height="26" viewBox="0 0 30 26"><path d="M7.500 6.500h16v16h-16z" fill="none" stroke="#194b91" stroke-width="4"/><path d="M7.500 6.500h16v16h-16z" fill="none" stroke="#4a92ea" stroke-width="2"/><circle cx="8" cy="8" r="4" fill="#063006"/><circle cx="8" cy="8" r="2" fill="#14e014"/></svg></button>
      <i class="tri"></i>
    </div>
    <div class="sg g92">
      <button aria-label="选择循环"><svg width="30" height="26" viewBox="0 0 30 26" fill="none" stroke="#b5b5b5" stroke-width="1.800"><path d="M6 23V6h18v4M6 23h4" stroke-dasharray="3 1.500"/><path d="M5 5h6l-6 6z" fill="#ccc" stroke="none"/><path d="M11 11h13v12H11zM15 15h5v4h-5z"/></svg></button>
      <button aria-label="注释可见性"><svg width="30" height="26" viewBox="0 0 30 26"><path d="M14 5h3l1 3-2 7 10 9h-4l-6-4-6 4H6l6-9z" fill="#a9acae"/><circle cx="20" cy="10" r="4" fill="#505050" stroke="#b0b3b5" stroke-width="1.800"/></svg></button>
      <button aria-label="自动缩放"><svg width="30" height="26" viewBox="0 0 30 26"><path d="M14 5h3l1 3-2 7 10 9h-4l-6-4-6 4H6l6-9z" fill="#a9acae"/><path d="M23 5l-4 5h5l-3 6" fill="none" stroke="#b5b8ba" stroke-width="2"/></svg></button>
    </div>
    <div class="sg g50">
      <button aria-label="切换工作空间"><svg width="30" height="26" viewBox="0 0 30 26"><path d="M15 7v16M7 15h16M9.300 9.300l11.400 11.400M20.700 9.300L9.300 20.700" stroke="#bbb" stroke-width="3.500"/><circle cx="15" cy="15" r="6" fill="#bbb"/><circle cx="15" cy="15" r="2" fill="#484848"/></svg></button>
      <i class="tri"></i>
    </div>
    <div class="sg g31"><button aria-label="注释监视器"><svg width="30" height="26" viewBox="0 0 30 26"><path d="M15 6v18M6 15h18" stroke="#b5b8ba" stroke-width="2.500"/></svg></button></div>
    <div class="sg g32"><button aria-label="隔离对象"><svg width="30" height="26" viewBox="0 0 30 26" fill="none" stroke="#b0b0b0" stroke-width="1.800"><path d="M6 6h8v8H6zM14 16l4 7h-8z"/><circle cx="20" cy="13" r="4.300"/></svg></button></div>
    <div class="sg g33"><button aria-label="硬件加速"><svg width="30" height="26" viewBox="0 0 30 26"><circle cx="15" cy="15" r="11" fill="#1f4d86"/><circle cx="15" cy="15" r="9.500" fill="#0b52b8"/><path d="M14 19l7-5" stroke="#5b9de8" stroke-width="2"/></svg></button></div>
    <div class="sg g31"><button aria-label="图形状态"><svg width="30" height="26" viewBox="0 0 30 26"><path d="M7 6h9l4 4v8H7z" fill="#e9f2fb"/><path d="M12 10l8-2 2 8-9 2z" fill="#3b86d2"/><circle cx="10" cy="10" r="2" fill="none" stroke="#277" /><path d="M6 15h12l3 7H7z" fill="#eec389" stroke="#b1772f"/><path d="M14 20l3 3 7-6" fill="none" stroke="#15b01b" stroke-width="2.800"/></svg></button></div>
    <div class="sg g60 last">
      <button aria-label="全屏"><svg width="30" height="26" viewBox="0 0 30 26"><path d="M5.500 7.500h18v14h-18z" fill="none" stroke="#aaa" stroke-width="1.800"/><path d="M16 9h6v6zM8 14v6h6z" fill="#ccc"/></svg></button>
      <button aria-label="自定义"><svg width="25" height="26" viewBox="0 0 25 26"><path d="M5 9h20M5 15h20M5 21h20" stroke="#bbb" stroke-width="2.500"/></svg></button>
      <span class="record">录制</span>
    </div>
  </div>
</footer>
</body>
</html>
```
FILE: styles.css
```
* { box-sizing: border-box; }

body {
  margin: 0;
  height: 100vh;
  display: flex;
  flex-direction: column;
  overflow: hidden;
  background: #383838;
  font: 15px/20px "Noto Sans", "Noto Sans CJK SC", sans-serif;
  color: #fff;
}

button {
  margin: 0;
  padding: 0;
  border: 0;
  background: none;
  color: inherit;
  font: inherit;
  white-space: nowrap;
  flex: none;
}

svg { display: block; flex: none; }
i { display: block; flex: none; }
.defs { position: absolute; width: 0; height: 0; }
.grow { flex-grow: 1; }

/* title strip */
.titlestrip {
  position: relative;
  display: flex;
  flex: none;
  height: 8px;
  background: #a5a5a5;
  border-bottom: 1px solid #333;
}
.appbtn {
  position: absolute;
  left: 0;
  top: 0;
  z-index: 2;
  width: 33px;
  height: 18px;
  overflow: hidden;
  background: linear-gradient(#8c8c8c, #666);
  border: solid #111;
  border-width: 0 1px 1px 0;
}
.ts { height: 7px; }
.ts-a { width: 185px; }
.ts-white { width: 133px; background: #fff; }
.ts-b { width: 17px; }
.ts-box { width: 225px; height: 6px; background: #747474; border: solid #333; border-width: 0 1px 1px; }
.ts-c { width: 314px; }
.ts-end { flex: 1; background: #fff; }

/* menu bar */
.menubar {
  display: flex;
  align-items: center;
  flex: none;
  height: 25px;
  padding: 0 0 2px 48px;
  overflow: hidden;
  background: linear-gradient(#8a8a8a, #4e4e4e);
}
.menus { display: flex; gap: 28px; }
.winbtns { display: flex; gap: 5px; margin-left: auto; }

/* drawing tabs */
.filetabs {
  display: flex;
  align-items: flex-end;
  flex: none;
  height: 31px;
  padding-left: 11px;
  color: #a5a5a5;
}
.ftab {
  position: relative;
  display: flex;
  align-items: center;
  justify-content: space-between;
  width: 170px;
  height: 28px;
  margin-right: -17px;
  padding: 0 22px;
}
.ftab-start { padding-left: 20px; }
.ftab.on { color: #fff; z-index: 1; }
.ftab span, .ftab .x { position: relative; }
.shape { position: absolute; left: 0; top: 0; width: 100%; height: 100%; }
.ftab-add { margin: 0 0 3px 19px; }

/* toolbars */
.toolbars {
  display: flex;
  flex-direction: column;
  gap: 3px;
  flex: none;
  padding: 4px 0;
  overflow: hidden;
  background: #5a5a5a;
}
.trow { display: flex; gap: 1px; height: 24px; }
.tb {
  display: flex;
  align-items: center;
  flex: none;
  height: 24px;
  padding-left: 1px;
  background: #535353;
  border: solid #383838;
  border-width: 1px 1px 1px 0;
}
.tb.flush { padding-left: 0; }
.tb.grow { flex: 1 0 0; min-width: 0; border-right: 0; overflow: hidden; }
.i { width: 23px; height: 22px; display: flex; justify-content: center; }
.i svg { width: 22px; height: 22px; }
.dd { width: 13px; display: flex; justify-content: center; }
.dd svg { width: 8px; height: 6px; }
.sep { width: 6px; height: 18px; border-left: 2px solid transparent; background: linear-gradient(90deg, #848484 1px, transparent 1px); }
.grip {
  width: 5px;
  height: 16px;
  margin: 0 2px 0 1px;
  background: repeating-linear-gradient(#222 0 1px, #777 1px 2px);
}
.bar { width: 1px; height: 18px; margin: 0 2px 0 0; background: #999; }
.slim2 .bar { margin-right: 1px; }

.combo {
  height: 22px;
  border: 1px solid #b5b5b5;
  border-radius: 0;
  background: #e2e2e2;
  color: #000;
  font: inherit;
}
select {
  appearance: none;
  padding: 0 0 0 4px;
  outline: 0;
}
select, .combo.box {
  background: #e2e2e2 url("data:image/svg+xml,%3Csvg xmlns='http://www.w3.org/2000/svg' width='10' height='6'%3E%3Cpath d='M.7.7L5 5 9.300.7' fill='none' stroke='%23444' stroke-width='1.200'/%3E%3C/svg%3E") no-repeat right 4px center;
}
select.w174 { background-position: right 4px center; }
.combo.box { display: flex; align-items: center; flex-shrink: 0; }
.bare {
  flex: 1;
  min-width: 0;
  height: 20px;
  padding: 0 0 0 4px;
  border: 0;
  background: none;
  color: #000;
  font: inherit;
}
.combo.serif { font: 15px/20px "Liberation Serif", serif; }
.pl9 { padding-left: 8px; }
.pl18 { padding-left: 17px; }
.w118 { width: 119px; }
.w120 { width: 120px; }
.w150 { width: 151px; }
.w159 { width: 160px; }
.w160 { width: 160px; flex-shrink: 0; }
.w174 { width: 174px; }
.w299 { width: 300px; }
.lay { margin-right: -9px; }
.swatch { width: 11px; height: 11px; margin-left: 5px; background: #e400e4; border: 1px solid #222; }
.line { height: 1px; margin-left: 4px; background: #000; }
.l60 { width: 60px; }
.l36 { width: 36px; }

/* workspace */
.workspace {
  flex: 1;
  min-height: 0;
  display: grid;
  grid-template-columns: 21px 1fr 21px 25px;
  grid-template-rows: 1fr 22px;
  grid-template-areas: "left canvas vs right" "left hs hs right";
  background: #5d5d5d;
}
.side { display: flex; flex-direction: column; min-height: 0; overflow: hidden; }
.side button { height: 22px; display: block; }
.left { grid-area: left; width: 17px; align-self: start; border: 1px solid #383838; border-left: 0; }
.left svg { width: 16px; height: 22px; }
.right { grid-area: right; padding-left: 4px; gap: 1px; }
.right .group { display: flex; flex-direction: column; border: 1px solid #383838; border-right: 0; overflow: hidden; }
.right svg { width: 20px; height: 22px; }
.vgrip {
  width: 12px;
  height: 4px;
  margin: 3px 0 0;
  background: repeating-linear-gradient(90deg, #1f1f1f 0 1px, #777 1px 2px);
}
.right .vgrip { margin-left: 3px; }
.hsep { height: 1px; margin: 2px 0 1px 3px; background: #eee; }

.canvas { grid-area: canvas; position: relative; min-width: 0; min-height: 0; background: #000; }
.drawing { width: 100%; height: 100%; }

.navbar {
  position: absolute;
  top: 3px;
  right: 4px;
  width: 32px;
  display: flex;
  flex-direction: column;
  align-items: center;
  gap: 2px;
  background: #3e3f40;
  border-radius: 4px;
  overflow: hidden;
}
.nb-top { width: 100%; height: 11px; display: flex; justify-content: flex-end; align-items: center; padding-right: 2px; background: #535353; }
.nb-top.end { background: none; }
.nb.line-top { border-top: 1px solid #555; }
.two { font: bold 10px "Liberation Sans", sans-serif; fill: #262729; stroke: none; }
.abc { font: bold 7px "Liberation Sans", sans-serif; fill: #fff; }
.q { font: bold 13px "Liberation Sans", sans-serif; fill: #333; }

.vscroll { grid-area: vs; display: flex; flex-direction: column; align-items: center; padding: 6px 0 7px; background: #eef0ef; }
.vscroll .thumb { width: 19px; height: 21px; background: #cdcdcd; }
.vscroll .up { flex: 249; }
.vscroll .down { flex: 376; }
.hscroll { grid-area: hs; display: flex; align-items: center; padding: 0 27px 1px 5px; background: #eef0ef; border-bottom: 1px solid #777; }
.hscroll .thumb { width: 21px; height: 19px; background: #cdcdcd; }
.hscroll .before { flex: 433; }
.hscroll .after { flex: 525; }

/* command line */
.command { display: flex; flex: none; height: 58px; border-top: 1px solid #555; border-bottom: 2px solid #777; background: #777; }
.cmdgrip {
  width: 21px;
  display: flex;
  flex-direction: column;
  align-items: flex-start;
  justify-content: space-between;
  padding-top: 4px;
  background: linear-gradient(#8a8a8a, #3c3c3c);
  overflow: hidden;
}
.dots { width: 17px; height: 7px; background: radial-gradient(#ccc 1px, transparent 1px) 0 0 / 4px 4px; }
.cmdbody { flex: 1; min-width: 0; display: flex; flex-direction: column; padding-top: 1px; gap: 1px; }
.history {
  flex: 1;
  padding-left: 3px;
  background: #c8c8c8;
  color: #000;
  font: 18px/28px "DejaVu Sans Mono", monospace;
  white-space: pre;
}
.han { font: 20px/28px "Noto Sans CJK SC", sans-serif; }
.prompt { display: flex; align-items: center; height: 25px; padding-left: 5px; background: #fff; }
.prompt input {
  flex: 1;
  min-width: 0;
  height: 25px;
  padding: 0 0 4px 8px;
  border: 0;
  outline: 0;
  background: none;
  font: 20px/20px "Noto Sans CJK SC", sans-serif;
}
.prompt input::placeholder { color: #9a9e98; font-style: italic; opacity: 1; }

/* layout tabs and status bar */
.bottom { flex: none; height: 54px; display: flex; flex-direction: column; justify-content: space-between; overflow: hidden; }
.layouts { display: flex; height: 25px; padding-left: 3px; color: #b5b5b5; }
.ltab { position: relative; height: 25px; margin-right: -7px; }
.ltab span { position: relative; }
.t1 { width: 66px; }
.t2 { width: 76px; }
.ltab.on { color: #fff; font-weight: bold; z-index: 1; }
.ladd { display: flex; align-items: center; margin-left: 9px; }

.status { display: flex; height: 28px; margin-left: auto; gap: 1px; }
.sg { display: flex; align-items: center; height: 28px; background: #505050; border: 1px solid #757575; border-bottom: 0; }
.sg button { height: 26px; }
.tri { width: 0; margin: 0 auto; border: 5px solid transparent; border-top-color: #fff; border-bottom: 0; }
.g36 { width: 36px; }
.g130 { width: 129px; }
.g80 { width: 79px; }
.g92 { width: 93px; }
.g50 { width: 50px; }
.g31 { width: 31px; }
.g32 { width: 32px; }
.g33 { width: 33px; }
.g60 { width: 55px; border-right: 0; }
.g31, .g32, .g33 { justify-content: center; }
.g36 { justify-content: flex-end; }
.sg .paper { padding-top: 3px; }
.last { position: relative; }
.record {
  position: absolute;
  left: 8px;
  top: 8px;
  right: 0;
  height: 19px;
  padding: 2px 0 0 9px;
  background: rgba(200, 200, 200, .5);
  color: #333;
  line-height: 17px;
}
```
